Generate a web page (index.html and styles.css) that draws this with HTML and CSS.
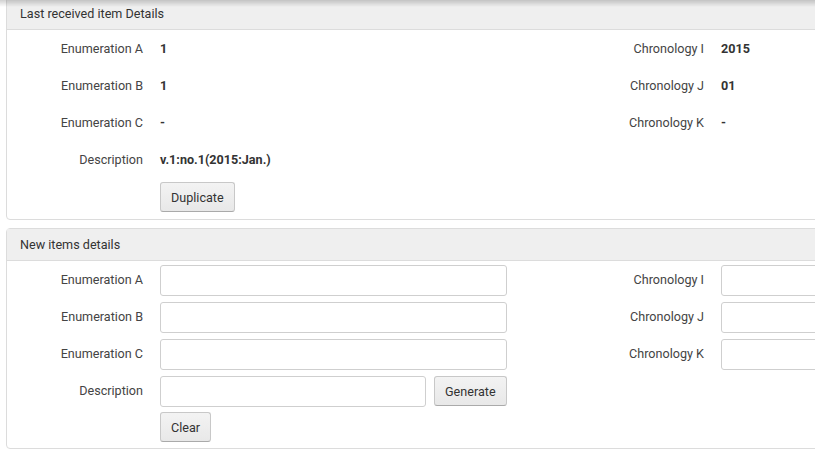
FILE: index.html
```html
<!DOCTYPE html>
<html lang="en">
<head>
  <meta charset="UTF-8" />
  <title>Receive items</title>
  <link rel="stylesheet" href="styles.css">
</head>
<body>
  <div class="topshade"></div>

  <div class="page">
    <!-- LAST RECEIVED -->
    <div class="panel first">
      <div class="panel-head">Last received item Details</div>
      <div class="panel-body">
        <div class="grid info">
          <div class="label">Enumeration A</div>
          <div class="value">1</div>
          <div class="label">Chronology I</div>
          <div class="value">2015</div>

          <div class="label">Enumeration B</div>
          <div class="value">1</div>
          <div class="label">Chronology J</div>
          <div class="value">01</div>

          <div class="label">Enumeration C</div>
          <div class="value">-</div>
          <div class="label">Chronology K</div>
          <div class="value">-</div>

          <div class="label">Description</div>
          <div class="value wide">v.1:no.1(2015:Jan.)</div>
        </div>
        <div class="actions">
          <button type="button">Duplicate</button>
        </div>
      </div>
    </div>

    <!-- NEW ITEMS -->
    <div class="panel">
      <div class="panel-head">New items details</div>
      <div class="panel-body">
        <div class="grid fields">
          <label class="label" for="enumA">Enumeration A</label>
          <input type="text" id="enumA" />
          <label class="label" for="chronI">Chronology I</label>
          <input type="text" id="chronI" />

          <label class="label" for="enumB">Enumeration B</label>
          <input type="text" id="enumB" />
          <label class="label" for="chronJ">Chronology J</label>
          <input type="text" id="chronJ" />

          <label class="label" for="enumC">Enumeration C</label>
          <input type="text" id="enumC" />
          <label class="label" for="chronK">Chronology K</label>
          <input type="text" id="chronK" />

          <label class="label" for="desc">Description</label>
          <div class="desc-row wide">
            <input type="text" id="desc" class="desc" />
            <button type="button">Generate</button>
          </div>
        </div>
        <div class="actions">
          <button type="button">Clear</button>
        </div>
      </div>
    </div>
  </div>
</body>
</html>
```

FILE: styles.css
```css
body {
  margin: 0;
  padding: 0;
  overflow: hidden;
  background: #fff;
  color: #333;
  font-family: Roboto, "Liberation Sans", Arial, sans-serif;
  font-size: 12.6px;
}

.topshade {
  position: fixed;
  top: 0;
  left: 0;
  right: 0;
  height: 7px;
  background: linear-gradient(to bottom, rgba(0,0,0,0.18), rgba(0,0,0,0));
  z-index: 5;
}

.page {
  width: 860px;
  padding: 0 6px;
}

.panel {
  border: 1px solid #dcdcdc;
  border-radius: 4px;
  margin-bottom: 8px;
  background: #fff;
}

.panel.first {
  margin-top: -3px;
}

.panel-head {
  height: 31px;
  line-height: 31px;
  padding: 0 13px;
  background: #efefef;
  border-bottom: 1px solid #dcdcdc;
  color: #333;
}

.grid {
  display: grid;
  grid-template-columns: 153px 347px 214px 1fr;
}

.label {
  text-align: right;
  padding-right: 17px;
  color: #444;
}

.info .label,
.info .value {
  height: 37px;
  line-height: 37px;
}

.value {
  font-weight: bold;
  color: #333;
}

.wide {
  grid-column: 2 / 4;
}

.info + .actions {
  padding: 4px 0 7px 153px;
}

.fields {
  padding-top: 4px;
  row-gap: 6px;
}

.fields .label {
  line-height: 30px;
}

input {
  box-sizing: border-box;
  height: 31px;
  width: 100%;
  border: 1px solid #cfcfcf;
  border-radius: 3px;
  padding: 0 8px;
  font: inherit;
  background: #fff;
}

.desc-row {
  display: flex;
  gap: 8px;
  width: 347px;
}

.desc-row .desc {
  width: 266px;
}

.fields + .actions {
  padding: 5px 0 6px 153px;
}

button {
  height: 30px;
  padding: 0 10px;
  font: inherit;
  color: #333;
  background: linear-gradient(to bottom, #f3f3f3, #e8e8e8);
  border: 1px solid #c8c8c8;
  border-bottom-color: #aaa;
  border-radius: 3px;
  cursor: pointer;
}

button:hover {
  background: #e2e2e2;
}
```
